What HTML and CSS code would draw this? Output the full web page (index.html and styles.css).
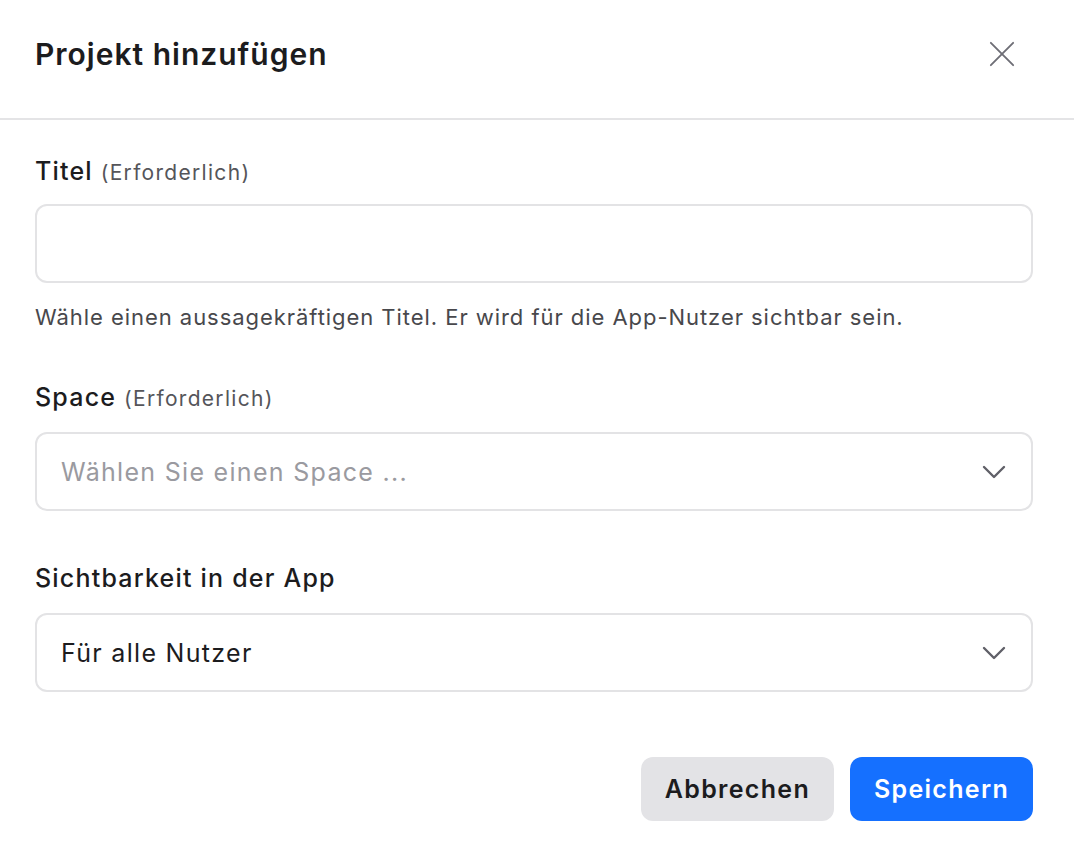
FILE: index.html
```html
<!DOCTYPE html>
<html lang="de">
<head>
    <meta charset="UTF-8">
    <meta name="viewport" content="width=device-width, initial-scale=1.0">
    <title>Projekt hinzufügen</title>
    <link rel="stylesheet" href="styles.css">
</head>
<body>
    <div class="dialog">
        <div class="dialog-header">
            <h1>Projekt hinzufügen</h1>
            <button class="close-btn" type="button" aria-label="Schließen">
                <svg width="26" height="26" viewBox="0 0 28 28" fill="none" stroke="currentColor" stroke-width="2" stroke-linecap="round">
                    <path d="M2 2L26 26M26 2L2 26"/>
                </svg>
            </button>
        </div>
        <form class="dialog-body">
            <div class="field">
                <label for="title">Titel <span class="hint">(Erforderlich)</span></label>
                <input type="text" id="title">
                <p class="help">Wähle einen aussagekräftigen Titel. Er wird für die App-Nutzer sichtbar sein.</p>
            </div>
            <div class="field">
                <label for="space">Space <span class="hint">(Erforderlich)</span></label>
                <div class="select">
                    <span class="placeholder">Wählen Sie einen Space ...</span>
                    <svg width="24" height="14" viewBox="0 0 24 14" fill="none" stroke="currentColor" stroke-width="2.4" stroke-linecap="round" stroke-linejoin="round">
                        <path d="M2 2L12 12L22 2"/>
                    </svg>
                </div>
            </div>
            <div class="field">
                <label for="visibility">Sichtbarkeit in der App</label>
                <div class="select">
                    <span>Für alle Nutzer</span>
                    <svg width="24" height="14" viewBox="0 0 24 14" fill="none" stroke="currentColor" stroke-width="2.4" stroke-linecap="round" stroke-linejoin="round">
                        <path d="M2 2L12 12L22 2"/>
                    </svg>
                </div>
            </div>
            <div class="actions">
                <button type="button" class="btn btn-secondary">Abbrechen</button>
                <button type="submit" class="btn btn-primary">Speichern</button>
            </div>
        </form>
    </div>
</body>
</html>
```

FILE: styles.css
```css
body {
    font-family: Inter, "Noto Sans", sans-serif;
    background-color: #fff;
    color: #1c1c1e;
    margin: 0;
}
.dialog {
    width: 1074px;
}
.dialog-header {
    display: flex;
    justify-content: space-between;
    align-items: center;
    height: 108px;
    padding: 0 59px 10px 35px;
    border-bottom: 2px solid #e4e4e6;
}
h1 {
    margin: 0;
    font-size: 30px;
    font-weight: 600;
    letter-spacing: 1px;
}
.close-btn {
    background: none;
    border: none;
    padding: 0;
    color: #6e6e76;
    display: flex;
    cursor: pointer;
}
.dialog-body {
    padding: 36px 41px 0 35px;
}
.field {
    margin-bottom: 49px;
}
.field:nth-child(2) {
    margin-bottom: 52px;
}
label {
    display: block;
    font-size: 25px;
    font-weight: 500;
    letter-spacing: 1.2px;
    line-height: 30px;
    margin-bottom: 16px;
}
.field:nth-child(2) label {
    margin-bottom: 18px;
}
.field:nth-child(3) label {
    margin-bottom: 20px;
}
.hint {
    font-size: 21px;
    font-weight: 400;
    letter-spacing: 1.3px;
    color: #55555a;
}
input,
.select {
    box-sizing: border-box;
    width: 100%;
    height: 79px;
    border: 2px solid #e3e3e5;
    border-radius: 12px;
    font-family: inherit;
    font-size: 25px;
    letter-spacing: 1.3px;
    padding: 0 24px;
    margin: 0;
}
.select {
    display: flex;
    align-items: center;
    justify-content: space-between;
    color: #1c1c1e;
}
.select svg {
    color: #606068;
    margin-right: 1px;
}
.placeholder {
    color: #9a9aa0;
}
.help {
    margin: 18px 0 0;
    font-size: 22px;
    letter-spacing: 0.95px;
    color: #48484c;
    line-height: 32px;
}
.actions {
    display: flex;
    justify-content: flex-end;
    gap: 16px;
    margin-top: 65px;
}
.btn {
    height: 64px;
    border: none;
    border-radius: 12px;
    font-family: inherit;
    font-size: 25px;
    font-weight: 600;
    letter-spacing: 1.3px;
    padding: 0 24px;
    cursor: pointer;
}
.btn-secondary {
    background: #e3e3e6;
    color: #1c1c1e;
}
.btn-primary {
    background: #1570ff;
    color: #fff;
}
```
